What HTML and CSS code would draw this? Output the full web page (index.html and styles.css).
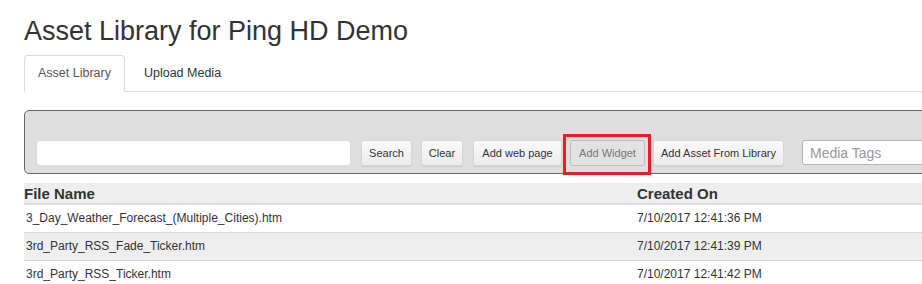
FILE: index.html
```html
<!DOCTYPE html>
<html>
<head>
<meta charset="utf-8">
<link rel="stylesheet" href="styles.css">
</head>
<body>
<div class="page">
  <h1 class="title">Asset Library for Ping HD Demo</h1>
  <div class="tabs">
    <div class="tab active">Asset Library</div>
    <div class="tab">Upload Media</div>
  </div>
  <div class="panel">
    <div class="toolbar">
      <input class="search" type="text">
      <button class="btn btn-search">Search</button>
      <button class="btn btn-clear">Clear</button>
      <button class="btn btn-web">Add web page</button>
      <span class="highlight"><button class="btn btn-widget" disabled>Add Widget</button></span>
      <button class="btn btn-asset">Add Asset From Library</button>
      <input class="tags" type="text" placeholder="Media Tags">
    </div>
  </div>
  <div class="table">
    <div class="row head">
      <div class="c1">File Name</div>
      <div class="c2">Created On</div>
    </div>
    <div class="row">
      <div class="c1">3_Day_Weather_Forecast_(Multiple_Cities).htm</div>
      <div class="c2">7/10/2017 12:41:36 PM</div>
    </div>
    <div class="row alt">
      <div class="c1">3rd_Party_RSS_Fade_Ticker.htm</div>
      <div class="c2">7/10/2017 12:41:39 PM</div>
    </div>
    <div class="row">
      <div class="c1">3rd_Party_RSS_Ticker.htm</div>
      <div class="c2">7/10/2017 12:41:42 PM</div>
    </div>
  </div>
</div>
</body>
</html>
```

FILE: styles.css
```css
html, body {
  margin: 0;
  padding: 0;
  background: #fff;
  font-family: "Liberation Sans", Arial, sans-serif;
  color: #333;
  overflow: hidden;
}
.page {
  margin-left: 24px;
  width: 898px;
  overflow: hidden;
}
.title {
  margin: 0;
  padding-top: 14px;
  height: 55px;
  box-sizing: border-box;
  font-size: 27px;
  font-weight: normal;
  line-height: 34px;
  color: #333;
}
.tabs {
  display: flex;
  height: 37px;
  border-bottom: 1px solid #ddd;
  box-sizing: border-box;
}
.tab {
  padding: 0 13px;
  font-size: 12.5px;
  line-height: 35px;
  color: #333;
  border: 1px solid transparent;
  border-radius: 4px 4px 0 0;
  margin-right: 5px;
}
.tab.active {
  border-color: #ddd;
  border-bottom-color: #fff;
  background: #fff;
  color: #555;
  margin-bottom: -1px;
  height: 37px;
  box-sizing: border-box;
}
.panel {
  margin-top: 18px;
  width: 930px;
  height: 64px;
  box-sizing: border-box;
  background: #dedede;
  border: 1px solid #666;
  border-radius: 5px;
  padding: 29px 0 0 11px;
}
.toolbar {
  display: flex;
  align-items: flex-start;
}
.search {
  width: 315px;
  height: 26px;
  box-sizing: border-box;
  border: 1px solid #ddd;
  border-radius: 4px;
  background: #fff;
  margin: 0 10px 0 0;
  padding: 0;
  flex: none;
}
.btn {
  flex: none;
  height: 26px;
  box-sizing: border-box;
  padding: 0;
  white-space: nowrap;
  font-family: "Liberation Sans", Arial, sans-serif;
  font-size: 11px;
  color: #333;
  background: linear-gradient(#fafafa, #ececec);
  border: 1px solid #d6d6d6;
  border-radius: 3px;
  box-shadow: 0 1px 1px rgba(0,0,0,0.08);
  margin: 0;
}
.btn-search { width: 51px; margin-right: 9px; }
.btn-clear { width: 42px; margin-right: 10px; }
.btn-web { width: 89px; margin-right: 8px; }
.btn-widget {
  width: 75px;
  color: #777;
  background: #e2e2e2;
  border-color: #bdbdbd;
  box-shadow: none;
}
.highlight {
  position: relative;
  display: flex;
  flex: none;
  margin-right: 8px;
}
.highlight::after {
  content: "";
  position: absolute;
  left: -7px;
  right: -6px;
  top: -6px;
  bottom: -9px;
  border: 3px solid #e2202c;
}
.btn-asset { width: 131px; margin-right: 18px; }
.tags {
  flex: none;
  width: 200px;
  height: 25px;
  box-sizing: border-box;
  border: 1px solid #b5b5b5;
  border-radius: 3px;
  background: #fff;
  padding: 0 7px;
  font-family: "Liberation Sans", Arial, sans-serif;
  font-size: 14px;
  margin: 0;
}
.tags::placeholder { color: #999; }
.table {
  margin-top: 9px;
  width: 898px;
}
.row {
  display: flex;
  height: 28px;
  align-items: center;
  border-bottom: 1px solid #d8d8d8;
  box-sizing: border-box;
  padding-bottom: 2px;
  font-size: 12px;
  color: #333;
}
.row.head {
  height: 22px;
  padding-bottom: 0;
  background: #eee;
  font-size: 15px;
  font-weight: bold;
  border-bottom: 2px solid #ddd;
}
.row.alt { background: #eee; }
.c1 {
  width: 613px;
  box-sizing: border-box;
  padding-left: 2px;
}
.row.head .c1 { padding-left: 0; }
.c2 { flex: 1; }
```
